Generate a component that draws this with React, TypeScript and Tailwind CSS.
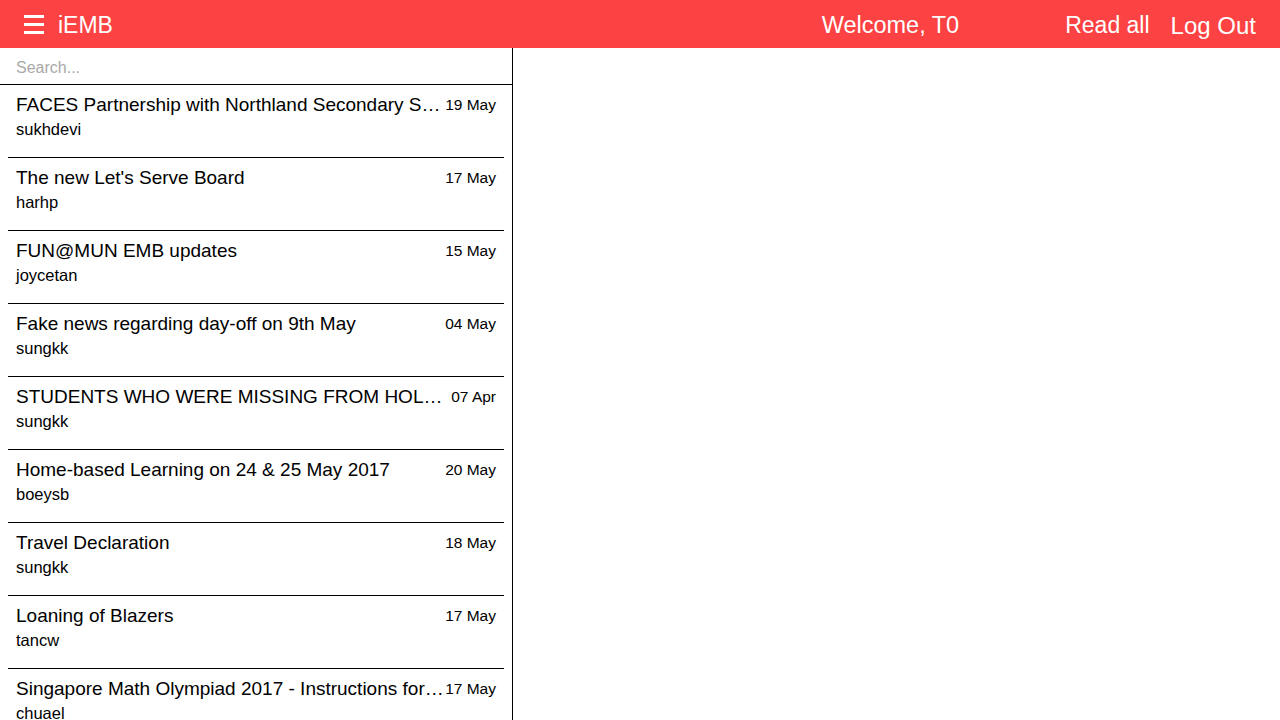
import { Fragment } from "react";

const posts = [
  { title: "FACES Partnership with Northland Secondary School", author: "sukhdevi", date: "19 May" },
  { title: "The new Let's Serve Board", author: "harhp", date: "17 May" },
  { title: "FUN@MUN EMB updates", author: "joycetan", date: "15 May" },
  { title: "Fake news regarding day-off on 9th May", author: "sungkk", date: "04 May" },
  { title: "STUDENTS WHO WERE MISSING FROM HOLDING AREA", author: "sungkk", date: "07 Apr" },
  { title: "Home-based Learning on 24 & 25 May 2017", author: "boeysb", date: "20 May" },
  { title: "Travel Declaration", author: "sungkk", date: "18 May" },
  { title: "Loaning of Blazers", author: "tancw", date: "17 May" },
  { title: "Singapore Math Olympiad 2017 - Instructions for participants", author: "chuael", date: "17 May" },
  { title: "Sports Day 2017", author: "limjh", date: "16 May" },
];

function Hamburger() {
  return (
    <div className="flex flex-col gap-[5px] w-5">
      <span className="block h-[3px] bg-white" />
      <span className="block h-[3px] bg-white" />
      <span className="block h-[3px] bg-white" />
    </div>
  );
}

export default function App() {
  return (
    <div
      className="h-[720px] flex flex-col overflow-hidden bg-white text-black"
      style={{ fontFamily: '"Helvetica Neue", "Liberation Sans", Arial, sans-serif' }}
    >
      {/* Top bar */}
      <header className="h-12 shrink-0 bg-[#fc4242] text-white flex items-center px-6">
        <Hamburger />
        <span className="ml-[14px] text-[23px] pt-[3px]">iEMB</span>
        <div className="flex-1" />
        <span className="text-[23.5px] mr-[106px] pt-[3px]">Welcome, T0</span>
        <span className="text-[23px] pt-[3px]">Read all</span>
        <span className="text-[24px] ml-[21px] pt-[3px]">Log Out</span>
      </header>

      <div className="flex flex-1 min-h-0 pt-[2px]">
        {/* Sidebar */}
        <aside className="w-[513px] shrink-0 border-r border-black flex flex-col -mt-[2px]">
          <div className="h-[37px] shrink-0 border-b border-black flex items-center px-4 pt-[3px]">
            <input
              placeholder="Search..."
              className="w-full outline-none text-[16px] placeholder:text-[#a9a9a9] bg-transparent"
            />
          </div>
          <div className="flex-1 overflow-hidden">
            {posts.map((p, i) => (
              <Fragment key={i}>
                <div className="mx-2 h-[73px] border-b border-black px-2 pt-[9px]">
                  <div className="flex items-center">
                    <span className="flex-1 min-w-0 truncate text-[19px] leading-[22px]">{p.title}</span>
                    <span className="shrink-0 text-[15.5px] leading-[22px] pl-[1px]">{p.date}</span>
                  </div>
                  <div className="text-[16.5px] leading-5 mt-[3px]">{p.author}</div>
                </div>
              </Fragment>
            ))}
          </div>
        </aside>
        <main className="flex-1" />
      </div>
    </div>
  );
}
